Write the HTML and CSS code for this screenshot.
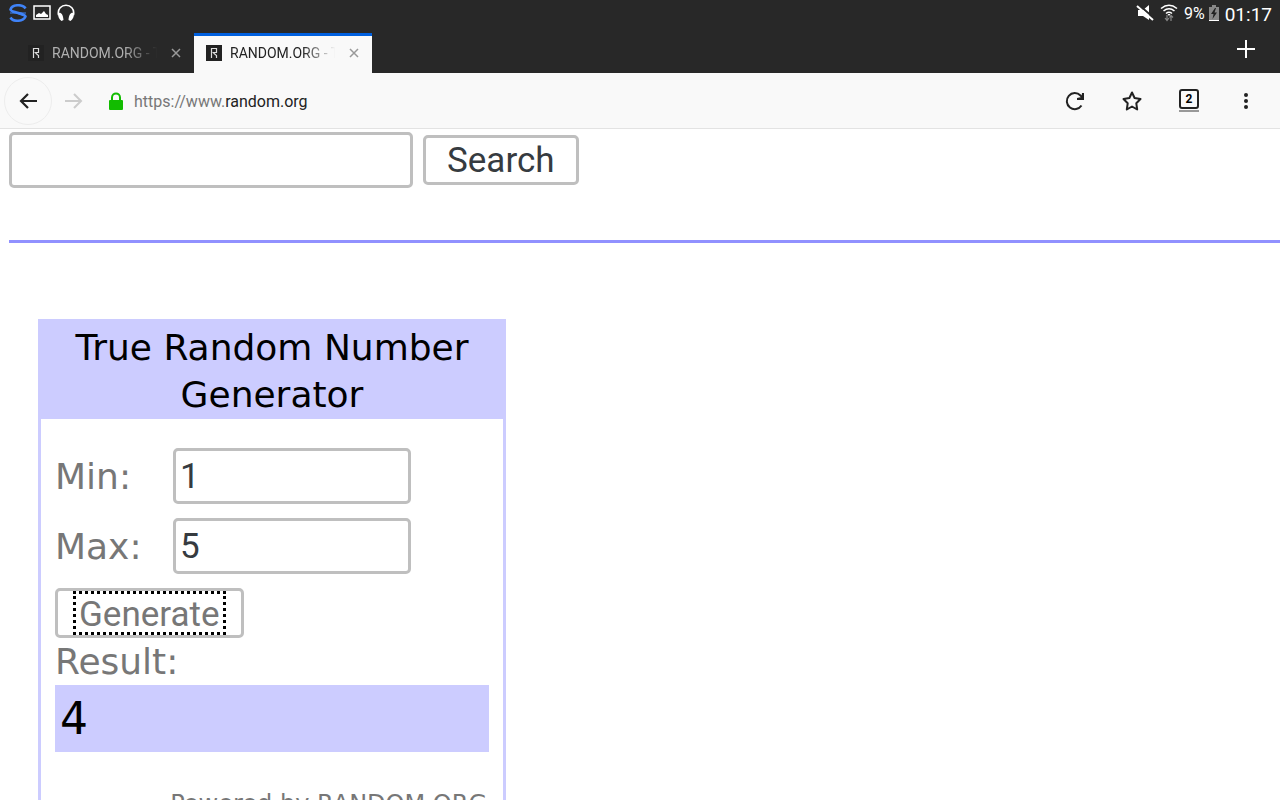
FILE: index.html
```html
<!DOCTYPE html>
<html lang="en">
  <head>
    <title>RANDOM.ORG - True Random Number Service</title>
    <meta charset="UTF-8">
    <meta name="viewport" content="width=device-width, initial-scale=1.0">
    <link rel="stylesheet" href="styles.css">
  </head>
  <body>
    <header class="top">
      <div class="status-bar">
        <div class="status-left">
          <svg width="18" height="18" viewBox="0 0 18 18" fill="none" stroke="#3f83f8" stroke-width="2.600">
            <path d="M16.500 4.500C14 0 3 0 1.500 5.500C2 9 16 8.500 16.500 12.500C14 18 4 18 1.500 13.500"/>
            <path d="M1.500 5.500C2 7 3 7.500 4 8L16.500 12.500M1 9L17 9" stroke-width="1.200"/>
          </svg>
          <svg width="18" height="18" viewBox="0 0 18 18">
            <rect x="1" y="2" width="16" height="13" fill="none" stroke="#fff" stroke-width="1.500"/>
            <path d="M3 13V11L6 9L8 10L11 7L13 10L15 11V13Z" fill="#fff"/>
          </svg>
          <svg width="18" height="18" viewBox="0 0 18 18">
            <path d="M1.500 11C-1 -2 19 -2 16.500 11" fill="none" stroke="#fff" stroke-width="1.600"/>
            <path d="M1 9C4 8 6 10 6.500 16L4.500 17C2 15 1 13 1 9ZM17 9C14 8 12 10 11.500 16L13.500 17C16 15 17 13 17 9Z" fill="#fff"/>
          </svg>
        </div>
        <div class="status-right">
          <svg width="18" height="18" viewBox="0 0 18 18">
            <path d="M2 6H7L13 1V16L7 12H2Z" fill="#fff"/>
            <path d="M3 1L18 14" stroke="#282828" stroke-width="2"/>
            <path d="M1 2L17 16" stroke="#fff" stroke-width="2"/>
          </svg>
          <svg width="18" height="18" viewBox="0 0 18 18" fill="none" stroke="#fff" stroke-width="1.600">
            <path d="M1 4.500Q9 -2 17 4.500M3.500 7Q9 2.500 14.500 7M6 9.500Q9 7 12 9.500"/>
            <path d="M7.500 10H10.500L9 12Z" fill="#fff" stroke="none"/>
            <path d="M7 11V16M5 14L7 16.500L9 14M11 17V12M9.500 13.500L11 11.500L13 13.500" stroke="#888" stroke-width="1.200"/>
          </svg>
          <span class="percent">9%</span>
          <svg width="10" height="18" viewBox="0 0 10 18">
            <path d="M0 3H3V1H7V3H10V17H0Z" fill="#888"/>
            <path d="M6 4L2 10H4.500L3.500 15L8 8.500H5.500L7 4Z" fill="#222"/>
            <rect y="16" width="10" height="1" fill="#fff"/>
          </svg>
          <span class="clock">01:17</span>
        </div>
      </div>
      <div class="tab-bar">
        <div class="tab">
          <svg class="favicon" width="16" height="16" viewBox="0 0 16 16">
            <rect width="16" height="16" fill="#222"/>
            <path d="M5.500 13V3.500H10.500V7.500H6.500M7.500 8L10.500 10.500V13" fill="none" stroke="#ddd" stroke-width="1.200"/>
          </svg>
          <span class="tab-title">RANDOM.ORG - T</span>
          <button class="tab-close" aria-label="Close tab">
            <svg width="10" height="10" viewBox="0 0 10 10"><path d="M1 1L9 9M9 1L1 9"/></svg>
          </button>
        </div>
        <div class="tab active">
          <svg class="favicon" width="16" height="16" viewBox="0 0 16 16">
            <rect width="16" height="16" fill="#222"/>
            <path d="M5.500 13V3.500H10.500V7.500H6.500M7.500 8L10.500 10.500V13" fill="none" stroke="#ddd" stroke-width="1.200"/>
          </svg>
          <span class="tab-title">RANDOM.ORG - T</span>
          <button class="tab-close" aria-label="Close tab">
            <svg width="10" height="10" viewBox="0 0 10 10"><path d="M1 1L9 9M9 1L1 9"/></svg>
          </button>
        </div>
        <button class="new-tab" aria-label="New tab">
          <svg width="18" height="18" viewBox="0 0 18 18"><path d="M9 0V18M0 9H18" stroke="#fff" stroke-width="2"/></svg>
        </button>
      </div>
    </header>
    <nav class="toolbar">
      <button class="back" aria-label="Back">
        <svg width="20" height="18" viewBox="0 0 20 18"><path d="M10 2L3 9L10 16M3 9H19" fill="none" stroke="#222" stroke-width="2.200"/></svg>
      </button>
      <button class="forward" aria-label="Forward">
        <svg width="20" height="18" viewBox="0 0 20 18"><path d="M10 2L17 9L10 16M17 9H1" fill="none" stroke="#ccc" stroke-width="2"/></svg>
      </button>
      <svg class="lock" width="14" height="18" viewBox="0 0 14 18">
        <path d="M3 9V5.500C3 0 11 0 11 5.500V9" fill="none" stroke="#12bc00" stroke-width="2"/>
        <rect y="8" width="14" height="10" rx="1" fill="#12bc00"/>
      </svg>
      <a class="url" href="#">https://www.<span>random.org</span></a>
      <div class="actions">
        <button aria-label="Reload">
          <svg width="20" height="20" viewBox="0 0 20 20">
            <path d="M16.500 14.500A8 8 0 1 1 15.500 4.500L18 7" fill="none" stroke="#222" stroke-width="2"/>
            <path d="M19 2V9H12V7L16.500 6L17 2Z" fill="#222"/>
          </svg>
        </button>
        <button aria-label="Bookmark">
          <svg width="20" height="20" viewBox="0 0 20 20"><path d="M10 1.500L12.600 7L18.500 8L14.300 12.300L15.200 18.500L10 15.500L4.800 18.500L5.700 12.300L1.500 8L7.400 7Z" fill="none" stroke="#222" stroke-width="2" stroke-linejoin="round"/></svg>
        </button>
        <button class="tabs-button" aria-label="2 open tabs"><span>2</span></button>
        <button aria-label="Menu">
          <svg width="20" height="20" viewBox="0 0 20 20" fill="#222"><circle cx="10" cy="4" r="2"/><circle cx="10" cy="10" r="2"/><circle cx="10" cy="16" r="2"/></svg>
        </button>
      </div>
    </nav>
    <main class="page">
      <form class="search">
        <input type="text" class="search-box" aria-label="Search">
        <button type="button">Search</button>
      </form>
      <hr>
      <section class="generator">
        <h1>True Random Number Generator</h1>
        <form>
          <div class="row">
            <label for="min">Min:</label>
            <input type="text" id="min" value="1">
          </div>
          <div class="row">
            <label for="max">Max:</label>
            <input type="text" id="max" value="5">
          </div>
          <button type="button" class="generate"><span>Generate</span></button>
          <label for="result">Result:</label>
          <output id="result">4</output>
        </form>
        <p class="powered">Powered by RANDOM.ORG</p>
      </section>
    </main>
  </body>
</html>
```
FILE: styles.css
```css
* {
  box-sizing: border-box;
}

body {
  margin: 0;
  height: 100vh;
  display: flex;
  flex-direction: column;
  overflow: hidden;
  background-color: #fff;
  font-family: Roboto, sans-serif;
}

button {
  padding: 0;
  border: none;
  background: none;
  font-family: inherit;
}

svg {
  display: block;
}

/* Status bar and tabs */
.top {
  flex: none;
  background-color: #282828;
  color: #fff;
}

.status-bar {
  display: flex;
  justify-content: space-between;
  height: 26px;
  padding: 0 8px 0 9px;
}

.status-left,
.status-right {
  display: flex;
  align-items: center;
  gap: 6px;
}

.percent {
  font-size: 16px;
  margin-right: -2px;
}

.clock {
  padding-top: 2px;
  font-size: 19px;
}

.tab-bar {
  display: flex;
  height: 47px;
  padding: 7px 24px 0 16px;
}

.tab {
  display: flex;
  align-items: center;
  width: 178px;
  padding: 0 13px 4px 12px;
  border-top: 3px solid transparent;
  color: #b1b1b1;
}

.tab.active {
  border-top-color: #0060df;
  background-color: #f9f9f9;
  color: #222;
}

.tab-title {
  flex: 1;
  margin: 0 8px;
  overflow: hidden;
  white-space: nowrap;
  font-size: 14px;
  line-height: 20px;
  -webkit-mask-image: linear-gradient(to right, #000 65%, transparent 95%);
  mask-image: linear-gradient(to right, #000 65%, transparent 95%);
}

.tab-close path {
  stroke: #999;
  stroke-width: 1.5;
}

.new-tab {
  align-self: flex-start;
  margin: 7px 0 0 auto;
  padding: 0 1px;
}

/* Address toolbar */
.toolbar {
  flex: none;
  display: flex;
  align-items: center;
  height: 56px;
  padding: 0 24px 0 4px;
  border-bottom: 1px solid #e3e3e3;
  background-color: #f9f9f9;
}

.back {
  display: flex;
  align-items: center;
  justify-content: center;
  width: 48px;
  height: 48px;
  border: 1px solid #ededed;
  border-radius: 50%;
}

.forward {
  margin: 0 25px 0 12px;
}

.url {
  margin-left: 11px;
  padding-top: 2px;
  color: #777;
  font-size: 16px;
  line-height: 20px;
  text-decoration: none;
}

.url span {
  color: #222;
}

.actions {
  display: flex;
  align-items: center;
  gap: 37px;
  margin-left: auto;
}

.tabs-button {
  width: 20px;
  border-bottom: 2px solid #999;
}

.tabs-button span {
  display: block;
  height: 20px;
  margin-bottom: 1px;
  border: 2px solid #222;
  border-radius: 3px;
  font-size: 12px;
  font-weight: bold;
  line-height: 16px;
}

/* Page content */
.page {
  flex: 1;
  min-height: 0;
  overflow: hidden;
  padding: 3px 0 0 9px;
  font-family: Verdana, "DejaVu Sans", sans-serif;
  font-size: 36px;
}

.page input,
.page button {
  border: 3px solid #bfbfbf;
  border-radius: 5px;
  background-color: #fff;
  color: #363b40;
  font-family: Roboto, sans-serif;
  font-size: 35px;
}

.page input {
  width: 238px;
  height: 56px;
  padding: 0 4px;
}

.page button {
  height: 50px;
  padding: 0 21px;
  line-height: 46px;
}

.search {
  display: flex;
  align-items: center;
  gap: 10px;
}

.page .search-box {
  width: 404px;
}

hr {
  height: 3px;
  margin: 52px 0 0;
  border: none;
  background-color: #9191ff;
}

.generator {
  width: 468px;
  margin: 76px 0 0 29px;
  border: 3px solid #ccf;
  color: #777;
}

h1 {
  margin: 0;
  padding: 2px 10px 1px;
  background-color: #ccf;
  color: #000;
  font-size: 36px;
  font-weight: normal;
  line-height: 47px;
  text-align: center;
}

.generator form {
  display: flex;
  flex-direction: column;
  padding: 29px 14px 0;
}

.row {
  display: flex;
  align-items: center;
  margin-bottom: 14px;
}

.row label {
  width: 118px;
}

.page .generate {
  align-self: flex-start;
  padding: 0 15px;
  color: #777;
}

.generate span {
  display: block;
  height: 44px;
  padding: 0 3px;
  border: 3px dotted #000;
  line-height: 42px;
}

.generator form > label {
  padding-top: 1px;
  line-height: 46px;
}

output {
  height: 67px;
  padding: 0 5px;
  background-color: #ccf;
  color: #000;
  font-size: 44px;
  line-height: 68px;
}

.powered {
  margin: 36px 16px 0;
  font-size: 24px;
  line-height: 32px;
  text-align: right;
}
```
